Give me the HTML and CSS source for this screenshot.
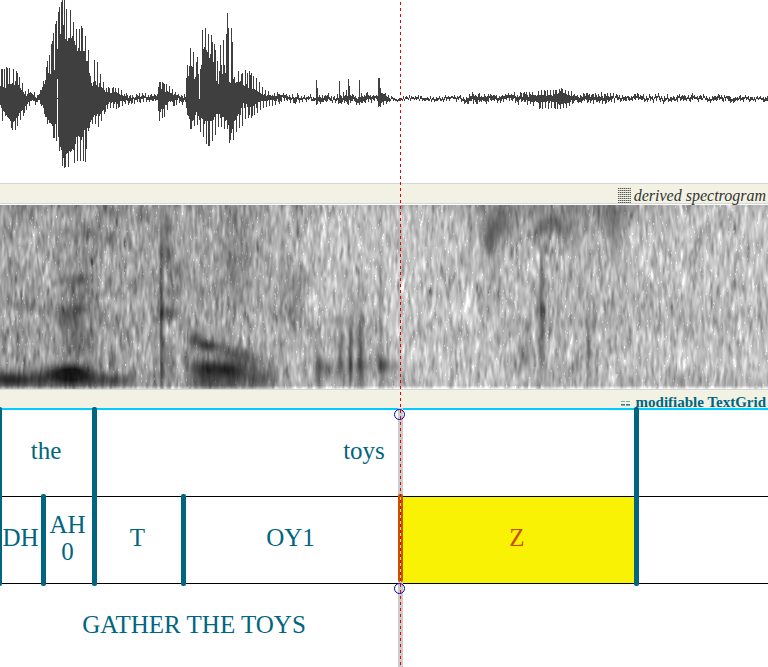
FILE: index.html
```html
<!DOCTYPE html>
<html lang="en">
<head>
<meta charset="utf-8">
<title>TextGrid editor</title>
<link rel="stylesheet" href="styles.css">
</head>
<body>
<main class="editor">
  <canvas class="waveform" id="waveform" width="768" height="183" aria-label="Waveform"></canvas>
  <header class="bar bar-spectrogram">
    <svg class="icon" width="14" height="16" viewBox="0 0 14 16" aria-hidden="true">
      <path d="M0 .5H13M0 2.5H13M0 4.5H13M0 6.5H13M0 8.5H13M0 10.5H13M0 12.5H13M0 14.5H13" stroke="currentColor" stroke-opacity=".35"/>
      <path d="M0 .5H13M0 2.5H13M0 4.5H13M0 6.5H13M0 8.5H13M0 10.5H13M0 12.5H13M0 14.5H13" stroke="currentColor" stroke-opacity=".7" stroke-dasharray="1 1"/>
    </svg>
    <h2 class="title">derived spectrogram</h2>
  </header>
  <canvas class="spectrogram" id="spectrogram" width="768" height="184" aria-label="Spectrogram"></canvas>
  <header class="bar bar-textgrid">
    <svg class="icon" width="14" height="16" viewBox="0 0 14 16" aria-hidden="true">
      <path d="M1 7.5H5M6 7.5H10M1 11.5H5M6 11.5H10" stroke="currentColor" stroke-opacity=".5"/>
      <path d="M1 10.5H5M6 10.5H10M1 14.5H5M6 14.5H10" stroke="currentColor" stroke-opacity=".8"/>
    </svg>
    <h2 class="title">modifiable TextGrid</h2>
  </header>
  <section class="tiers">
    <div class="tier words">
      <div class="interval first">the</div>
      <div class="interval">toys</div>
      <div class="interval last"></div>
    </div>
    <div class="tier phones">
      <div class="interval first">DH</div>
      <div class="interval">AH0</div>
      <div class="interval">T</div>
      <div class="interval">OY1</div>
      <div class="interval selected">Z</div>
      <div class="interval last"></div>
    </div>
    <div class="tier utterances">
      <div class="interval last">GATHER THE TOYS</div>
    </div>
    <div class="candidate"></div>
    <div class="candidate-edge"></div>
    <svg class="handle handle-top" width="13" height="13" viewBox="0 0 13 13" aria-hidden="true"><circle cx="6.5" cy="6.5" r="5"/></svg>
    <svg class="handle handle-bottom" width="13" height="13" viewBox="0 0 13 13" aria-hidden="true"><circle cx="6.5" cy="6.5" r="5"/></svg>
  </section>
  <div class="cursor"></div>
</main>
<script src="plots.js"></script>
</body>
</html>
```
FILE: styles.css
```css
* { box-sizing: border-box; }

body {
  margin: 0;
  background: #fff;
  color: #006680;
  font-family: "Liberation Serif", "Times New Roman", serif;
}

.editor {
  position: relative;
  min-height: 100vh;
  overflow: hidden;
  display: flex;
  flex-direction: column;
}

canvas { display: block; width: 100%; }
.waveform { height: 183px; }
.spectrogram { height: 184px; }

.bar {
  display: flex;
  justify-content: flex-end;
  align-items: center;
  gap: 2px;
  padding-right: 2px;
  background: #f1f2e3;
  border-top: 1px solid #d6d6d6;
}

.bar-spectrogram {
  height: 22px;
  color: #333;
  border-bottom: 1px solid #fff;
  box-shadow: inset 0 -1px #d6d6d6;
  padding-top: 4px;
}

.bar-textgrid { height: 19px; padding-top: 5px; }

.title { margin: 0; font-size: 15px; line-height: 16px; white-space: nowrap; }
.bar-spectrogram .title { font-size: 16px; font-style: italic; font-weight: 400; }
.icon { display: block; flex: none; }

.tiers {
  position: relative;
  flex: 1;
  border-top: 2px solid #00ccff;
}

.tier { display: grid; }
.words { height: 87px; grid-template-columns: 94fr 542fr 132fr; border-bottom: 1px solid #000; }
.phones { height: 87px; grid-template-columns: 43fr 51fr 89fr 217fr 236fr 132fr; border-bottom: 1px solid #000; }
.utterances { height: 86px; grid-template-columns: 390fr 378fr; }

.interval {
  position: relative;
  min-width: 0;
  display: flex;
  align-items: center;
  justify-content: center;
  padding: 0 4px 5px 2px;
  font-size: 25px;
  line-height: 27px;
  text-align: center;
  word-break: break-all;
}

.interval::after,
.interval.first::before {
  content: "";
  position: absolute;
  z-index: 1;
  top: -3px;
  bottom: -3px;
  right: -3px;
  width: 5px;
  border-radius: 2px;
  background: #006680;
}

.interval.first::before { right: auto; left: -3px; }
.interval.last::after { display: none; }
.interval.selected { background: #f9f205; color: #c85000; }

.candidate,
.candidate-edge {
  position: absolute;
  z-index: 2;
  left: calc(100% * 400 / 768 - 2px);
  width: 5px;
  top: -2px;
  bottom: 0;
  background: #ccc;
}

.candidate-edge {
  top: 84px;
  bottom: auto;
  height: 88px;
  border-radius: 2px;
  background: #c85000;
}

.candidate-edge::after {
  content: "";
  position: absolute;
  left: 2px;
  top: 0;
  bottom: 0;
  width: 1px;
  background: #f9f205;
}

.handle {
  position: absolute;
  z-index: 3;
  left: calc(100% * 400 / 768 - 7px);
  fill: none;
  stroke: #0000c0;
}
.handle-top { top: -2px; }
.handle-bottom { top: 172px; }

.cursor {
  position: absolute;
  z-index: 4;
  top: 2px;
  bottom: 0;
  left: calc(100% * 400 / 768);
  width: 1px;
  background: repeating-linear-gradient(to bottom, #e60000 0 3px, transparent 3px 6px);
}
```
FILE: plots.js
```js
// Deterministic noise source, so that both plots are the same on every load.
function generator(seed) {
  return function () {
    seed = (seed * 1664525 + 1013904223) >>> 0;
    return seed / 4294967296;
  };
}

// x, outer top, inner top, inner bottom, outer bottom
const envelope = [
  [0, 64, 92, 103, 121], [8, 65, 86, 118, 125], [14, 67, 86, 121, 132], [20, 76, 90, 110, 121],
  [25, 89, 97, 104, 112], [30, 88, 93, 100, 106], [36, 94, 97, 100, 104], [39, 91, 95, 100, 103],
  [42, 85, 88, 105, 108], [46, 64, 82, 116, 121], [50, 48, 76, 122, 136], [55, 22, 70, 122, 143],
  [58, 6, 55, 136, 148], [60, 0, 40, 145, 157], [63, 0, 30, 155, 168], [66, 4, 45, 152, 168],
  [72, 13, 45, 145, 166], [76, 26, 52, 135, 167], [82, 26, 52, 130, 167], [85, 32, 58, 125, 162],
  [88, 48, 74, 122, 132], [92, 74, 89, 118, 124], [94, 58, 84, 112, 123], [97, 62, 88, 112, 131],
  [100, 73, 88, 112, 126], [105, 86, 93, 103, 112], [110, 88, 94, 101, 108], [117, 86, 94, 102, 110],
  [125, 93, 97, 99, 104], [135, 93, 97, 99, 103], [150, 94, 97, 99, 101], [157, 93, 96, 99, 102],
  [159, 80, 90, 110, 123], [163, 82, 92, 107, 119], [168, 84, 93, 101, 109], [176, 92, 96, 100, 105],
  [185, 94, 97, 99, 102], [187, 60, 84, 114, 124], [189, 47, 72, 118, 128], [192, 46, 72, 118, 130],
  [196, 58, 88, 110, 124], [200, 36, 70, 118, 132], [204, 22, 54, 117, 142], [209, 30, 60, 120, 150],
  [213, 40, 70, 118, 143], [217, 56, 88, 108, 129], [221, 36, 74, 116, 127], [225, 28, 78, 118, 134],
  [228, 28, 82, 112, 132], [231, 32, 84, 128, 145], [235, 66, 84, 118, 136], [240, 74, 84, 110, 128],
  [243, 72, 87, 103, 125], [247, 70, 89, 104, 121], [252, 72, 91, 103, 117], [257, 79, 94, 101, 113],
  [264, 89, 96, 100, 108], [271, 91, 96, 100, 106], [283, 94, 97, 99, 103], [315, 95, 98, 99, 101],
  [320, 93, 96, 100, 103], [334, 95, 98, 99, 101], [342, 92, 96, 100, 104], [354, 94, 97, 100, 104],
  [368, 93, 97, 100, 104], [376, 96, 98, 99, 101], [381, 88, 94, 102, 106], [386, 92, 96, 100, 104],
  [391, 96, 98, 99, 100], [430, 96, 98, 99, 101], [460, 96, 98, 99, 101], [470, 93, 97, 100, 104],
  [500, 95, 97, 99, 102], [525, 93, 96, 100, 104], [540, 90, 96, 101, 109], [555, 90, 96, 101, 109],
  [560, 88, 92, 104, 109], [566, 90, 95, 103, 108], [576, 94, 97, 100, 103], [607, 93, 97, 100, 104],
  [616, 95, 98, 99, 102], [687, 95, 98, 99, 102], [768, 96, 98, 99, 101]
];

// isolated clicks: x, top, bottom
const clicks = [
  [62, 0, 166], [64, 0, 168], [159, 82, 121], [162, 82, 118], [227, 13, 120], [228, 28, 125], [231, 28, 133],
  [229, 90, 143], [208, 60, 146], [316, 80, 105], [317, 88, 104], [339, 81, 103], [346, 90, 102],
  [348, 79, 105], [349, 86, 98], [359, 80, 105], [378, 78, 107], [379, 78, 106], [380, 88, 107],
  [245, 70, 116], [249, 71, 115], [256, 78, 108]
];

// gaps between strong pulses: x, top, height
const gaps = [[57, 79, 19], [57, 99, 38], [199, 40, 59], [229, 28, 54]];

function drawWaveform() {
  const ctx = document.getElementById("waveform").getContext("2d");
  const random = generator(71);
  ctx.fillStyle = "#3f3f3f";
  let k = 0;
  let drift = 0;
  for (let x = 0; x < 768; x++) {
    while (k < envelope.length - 2 && x >= envelope[k + 1][0]) k++;
    const a = envelope[k], b = envelope[k + 1];
    const t = (x - a[0]) / (b[0] - a[0]);
    const at = i => a[i] + (b[i] - a[i]) * t;
    const up = (x % 3 === 1 || random() < 0.12) && random() < 0.9 ? 1 - random() * 0.2 : random() * 0.3;
    const down = (x % 3 === 2 || random() < 0.12) && random() < 0.9 ? 1 - random() * 0.2 : random() * 0.3;
    drift = drift * 0.6 + (random() - 0.5) * 2.8;
    const shift = at(4) - at(1) < 14 ? drift : 0;
    const top = Math.round(at(2) + (at(1) - at(2)) * up + shift);
    const bottom = Math.round(at(3) + (at(4) - at(3)) * down + shift);
    ctx.fillRect(x, top, 1, Math.max(2, bottom - top));
  }
  for (const [x, top, bottom] of clicks) ctx.fillRect(x, top, 1, bottom - top);
  for (const [x, top, height] of gaps) ctx.clearRect(x, top, 1, height);
}

// x, y, horizontal radius, vertical radius, darkness
const formants = [
  [8, 174, 26, 8, 115], [69, 166, 21, 7, 120], [72, 175, 36, 8, 95], [118, 175, 16, 6, 50],
  [78, 142, 16, 9, 35], [78, 116, 14, 20, 32], [64, 111, 11, 9, 42], [79, 103, 10, 5, 34],
  [78, 74, 9, 6, 55], [80, 27, 16, 7, 38], [80, 80, 14, 90, 16], [24, 136, 2, 20, 30],
  [20, 100, 22, 7, 20], [112, 8, 16, 9, 26], [112, 35, 14, 9, 20], [135, 78, 9, 7, 26],
  [161, 110, 2, 75, 75], [168, 108, 11, 7, 68], [167, 50, 7, 10, 46], [175, 65, 6, 9, 42],
  [170, 87, 7, 8, 42], [165, 24, 7, 14, 36], [165, 160, 8, 16, 48], [194, 133, 8, 7, 70],
  [208, 140, 12, 6, 95], [230, 147, 14, 7, 65], [246, 153, 12, 9, 45], [208, 161, 16, 7, 62],
  [200, 172, 14, 16, 62], [218, 174, 18, 12, 50], [229, 163, 13, 7, 58], [240, 172, 18, 12, 50],
  [262, 172, 18, 13, 50], [272, 165, 8, 13, 22], [236, 50, 14, 34, 30], [206, 80, 12, 12, 22],
  [230, 10, 30, 8, 10], [292, 80, 14, 18, 36], [290, 112, 12, 9, 38], [334, 115, 14, 5, 34],
  [318, 162, 3, 20, 75], [326, 163, 7, 9, 55], [340, 146, 3, 26, 62], [350, 148, 2, 34, 85],
  [360, 145, 3, 36, 78], [355, 160, 22, 8, 55], [355, 174, 24, 8, 24], [380, 120, 2, 60, 55],
  [383, 160, 6, 9, 85], [396, 161, 6, 6, 36], [353, 130, 16, 12, 32], [492, 26, 14, 18, 55],
  [489, 40, 7, 14, 45], [502, 18, 12, 12, 45], [484, 100, 5, 12, 22], [553, 19, 14, 9, 50],
  [548, 26, 26, 9, 28], [540, 4, 80, 9, 28], [572, 20, 14, 18, 16], [612, 12, 14, 14, 45],
  [615, 30, 8, 18, 30], [541, 80, 2, 50, 52], [542, 102, 4, 8, 42], [541, 145, 3, 34, 42],
  [523, 151, 4, 9, 42], [588, 148, 2, 28, 68], [710, 113, 60, 8, 14], [600, 110, 60, 16, 10],
  [700, 177, 90, 5, 16], [420, 177, 40, 5, 15]
];

// x, mean grey level of the background
const background = [[0, 161], [60, 158], [110, 155], [160, 165], [230, 160], [280, 173], [330, 186],
  [400, 194], [465, 190], [540, 174], [610, 179], [660, 188], [768, 188]];

function drawSpectrogram() {
  const w = 768, h = 184;
  const ctx = document.getElementById("spectrogram").getContext("2d");
  const image = ctx.createImageData(w, h);
  const random = generator(19);
  const noise = new Float32Array(w * h);
  for (let i = 0; i < 21000; i++) {
    const cx = random() * w, cy = random() * (h + 20) - 10;
    const length = 3 + random() * 5;
    const width = 0.8 + random() * 0.9;
    const slope = (random() - 0.5) * 0.3;
    const gain = (random() < 0.5 ? 1 : -0.9) * (8 + random() * 14);
    for (let y = Math.max(0, Math.ceil(cy - 2 * length)); y < Math.min(h, cy + 2 * length); y++) {
      const dy = (y - cy) / length;
      const mid = cx + (y - cy) * slope;
      for (let x = Math.max(0, Math.ceil(mid - 2 * width)); x < Math.min(w, mid + 2 * width); x++) {
        const dx = (x - mid) / width;
        noise[y * w + x] += gain * Math.exp(-dx * dx - dy * dy);
      }
    }
  }
  for (let i = 0; i < 1000; i++) {
    const x = Math.floor(random() * w), y = Math.floor(random() * (h - 2));
    noise[y * w + x] += 40;
    noise[(y + 1) * w + x] += 30;
  }
  let k = 0;
  for (let x = 0; x < w; x++) {
    while (k < background.length - 2 && x >= background[k + 1][0]) k++;
    const a = background[k], b = background[k + 1];
    const base = a[1] + (b[1] - a[1]) * (x - a[0]) / (b[0] - a[0]);
    for (let y = 0; y < h; y++) {
      let dark = 0;
      for (const [fx, fy, rx, ry, d] of formants) {
        const dx = (x - fx) / rx, dy = (y - fy) / ry;
        const q = dx * dx + dy * dy;
        if (q < 6) dark += d * Math.exp(-q * 0.8);
      }
      // voicing starts abruptly at the vowel onset and at the stop release
      if (x < 187 && x > 175 && y > 120) dark *= 0.25;
      if (x < 160 && x > 140) dark *= 0.5;
      let v = base - Math.min(dark, 136) + noise[y * w + x] * (1 - Math.min(dark, 110) / 140);
      if (y < 12) v -= (12 - y) * 1.2;
      if (y > 180) v += (y - 180) * 18;
      const p = (y * w + x) * 4;
      image.data[p] = image.data[p + 1] = image.data[p + 2] = Math.max(18, Math.min(255, v));
      image.data[p + 3] = 255;
    }
  }
  ctx.putImageData(image, 0, 0);
}

drawWaveform();
drawSpectrogram();
```
